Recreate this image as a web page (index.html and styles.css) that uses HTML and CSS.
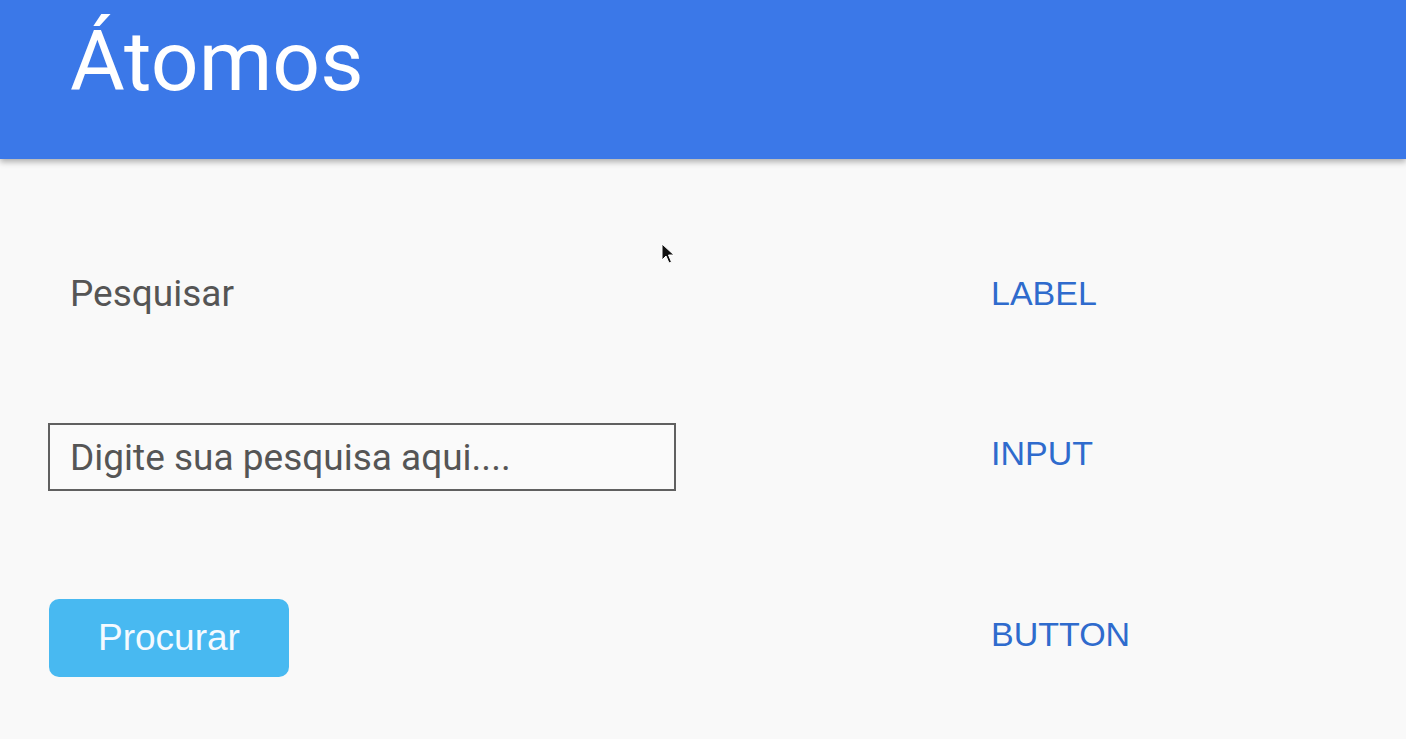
FILE: index.html
```html
<!DOCTYPE html>
<html lang="pt">
<head>
<meta charset="utf-8">
<title>Átomos</title>
<link rel="stylesheet" href="styles.css">
</head>
<body>
<header class="topbar">
  <h1 class="title">Átomos</h1>
</header>
<main class="content">
  <div class="row row-label">
    <div class="left"><span class="field-label">Pesquisar</span></div>
    <div class="right"><span class="kind">LABEL</span></div>
  </div>
  <div class="row row-input">
    <div class="left"><input class="search" type="text" placeholder="Digite sua pesquisa aqui...."></div>
    <div class="right"><span class="kind kind-up">INPUT</span></div>
  </div>
  <div class="row row-button">
    <div class="left"><button class="btn" type="button">Procurar</button></div>
    <div class="right"><span class="kind kind-up">BUTTON</span></div>
  </div>
</main>
<svg class="cursor" width="14" height="22" viewBox="0 0 14 22" aria-hidden="true">
  <path d="M1 1 L1 17 L5 13 L8 20 L10.5 19 L7.5 12 L13 12 Z" fill="#111" stroke="#fff" stroke-width="1"/>
</svg>
</body>
</html>
```

FILE: styles.css
```css
html, body {
  margin: 0;
  padding: 0;
}
body {
  background: #f9f9f9;
  font-family: Roboto, "Liberation Sans", Arial, sans-serif;
  width: 1406px;
  height: 739px;
  overflow: hidden;
  position: relative;
}
.topbar {
  height: 159px;
  background: #3b78e8;
  box-shadow: 0 3px 6px rgba(0, 0, 0, 0.3);
  padding: 20px 0 0 70px;
  box-sizing: border-box;
  position: relative;
  z-index: 1;
}
.title {
  margin: 0;
  font-family: Roboto, sans-serif;
  font-weight: 400;
  font-size: 84px;
  line-height: 84px;
  color: #ffffff;
}
.content {
  padding: 94px 0 0 48px;
}
.row {
  display: flex;
  align-items: center;
}
.left {
  width: 943px;
  flex: none;
}
.right {
  flex: 1;
}
.row-label {
  height: 80px;
}
.row-input {
  height: 80px;
  margin-top: 84px;
}
.row-button {
  height: 80px;
  margin-top: 101px;
}
.field-label {
  display: block;
  padding-left: 22px;
  font-family: Roboto, sans-serif;
  font-size: 37px;
  color: #555555;
}
.search {
  box-sizing: border-box;
  width: 628px;
  height: 68px;
  border: 2px solid #606060;
  background: #fafafa;
  padding: 0 0 0 20px;
  margin: 0;
  font-family: Roboto, sans-serif;
  font-size: 37px;
  color: #444444;
  outline: none;
}
.search::placeholder {
  color: #555555;
  opacity: 1;
}
.btn {
  box-sizing: border-box;
  width: 240px;
  height: 78px;
  margin: 0 0 0 1px;
  border: none;
  border-radius: 10px;
  background: #48b9f1;
  color: #f4faff;
  font-family: "Liberation Sans", Arial, sans-serif;
  font-size: 37px;
  padding: 0;
}
.kind {
  display: block;
  font-family: "Liberation Sans", Arial, sans-serif;
  font-size: 34px;
  color: #2f6bcd;
}
.kind-up {
  margin-bottom: 8px;
}
.cursor {
  position: absolute;
  left: 661px;
  top: 243px;
}
```
